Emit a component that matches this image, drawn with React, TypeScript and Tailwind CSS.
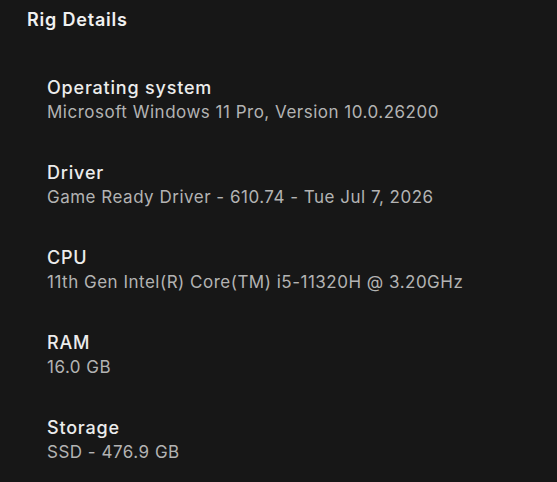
const details = [
  { label: 'Operating system', value: 'Microsoft Windows 11 Pro, Version 10.0.26200' },
  { label: 'Driver', value: 'Game Ready Driver - 610.74 - Tue Jul 7, 2026' },
  { label: 'CPU', value: '11th Gen Intel(R) Core(TM) i5-11320H @ 3.20GHz' },
  { label: 'RAM', value: '16.0 GB' },
  { label: 'Storage', value: 'SSD - 476.9 GB' },
];

export default function App() {
  return (
    <div
      className="w-[557px] h-[482px] overflow-hidden bg-[#171717] pl-[27px] pt-[8px]"
      style={{ fontFamily: 'Inter, Roboto, sans-serif' }}
    >
      <h2 className="text-[18px] leading-[24px] font-semibold tracking-[0.8px] text-[#f0f0f0]">Rig Details</h2>

      <div className="pl-[20px] mt-[43px] flex flex-col gap-[35px]">
        {details.map((d) => (
          <div key={d.label} className="flex flex-col">
            <span className="text-[18px] leading-[25px] font-medium tracking-[0.8px] text-[#ececec]">{d.label}</span>
            <span className="text-[17px] leading-[25px] tracking-[0.5px] text-[#b3b3b3]">{d.value}</span>
          </div>
        ))}
      </div>
    </div>
  );
}
